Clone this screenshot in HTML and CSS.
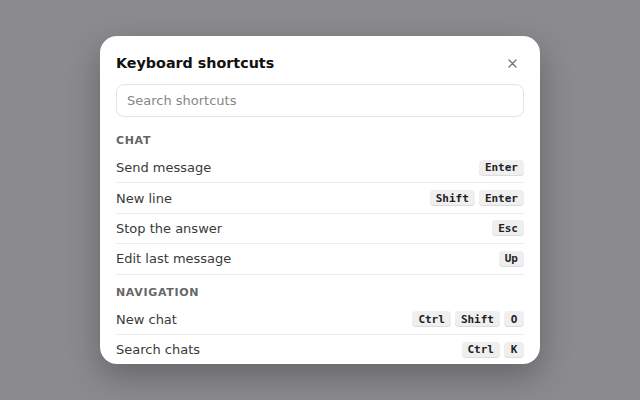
FILE: index.html
```html
<!DOCTYPE html>
<html lang="en">
<head>
  <meta charset="UTF-8" />
  <meta name="viewport" content="width=device-width, initial-scale=1" />
  <title>Keyboard shortcuts</title>
  <link rel="stylesheet" href="styles.css">
</head>
<body>
  <!-- SHORTCUTS DIALOG -->
  <div class="overlay">
    <div class="modal">
      <div class="modal-header">
        <h2>Keyboard shortcuts</h2>
        <button class="close-btn" aria-label="Close">
          <svg width="9" height="9" viewBox="0 0 9 9">
            <path d="M1 1 L8 8 M8 1 L1 8" stroke="#6f6f6f" stroke-width="1.3" stroke-linecap="round" fill="none" />
          </svg>
        </button>
      </div>

      <input type="text" class="search" placeholder="Search shortcuts" />

      <div class="list">
        <div class="section">
          <div class="section-title">Chat</div>
          <div class="row"><span>Send message</span><span class="keys"><kbd>Enter</kbd></span></div>
          <div class="row"><span>New line</span><span class="keys"><kbd>Shift</kbd><kbd>Enter</kbd></span></div>
          <div class="row"><span>Stop the answer</span><span class="keys"><kbd>Esc</kbd></span></div>
          <div class="row"><span>Edit last message</span><span class="keys"><kbd>Up</kbd></span></div>
        </div>

        <div class="section">
          <div class="section-title">Navigation</div>
          <div class="row"><span>New chat</span><span class="keys"><kbd>Ctrl</kbd><kbd>Shift</kbd><kbd>O</kbd></span></div>
          <div class="row"><span>Search chats</span><span class="keys"><kbd>Ctrl</kbd><kbd>K</kbd></span></div>
        </div>
      </div>
    </div>
  </div>
</body>
</html>
```

FILE: styles.css
```css
html, body {
  margin: 0;
  height: 100%;
}
body {
  font-family: "DejaVu Sans", sans-serif;
  background: #8b8a8f;
  color: #333;
}
.overlay {
  height: 100%;
  display: flex;
  align-items: center;
  justify-content: center;
}
.modal {
  width: 440px;
  height: 328px;
  box-sizing: border-box;
  background: #fff;
  border-radius: 17px;
  padding: 0 16px;
  display: flex;
  flex-direction: column;
  overflow: hidden;
  box-shadow: 0 12px 32px rgba(0,0,0,0.28);
}
.modal-header {
  display: flex;
  align-items: center;
  justify-content: space-between;
  padding-top: 15px;
  height: 24px;
}
h2 {
  margin: 0;
  font-size: 14.3px;
  font-weight: bold;
  color: #111;
}
.close-btn {
  width: 24px;
  height: 24px;
  border: none;
  background: none;
  padding: 0;
  display: flex;
  align-items: center;
  justify-content: center;
  cursor: pointer;
}
.search {
  margin-top: 9px;
  height: 33px;
  flex-shrink: 0;
  box-sizing: border-box;
  border: 1px solid #e3e3e3;
  border-radius: 8px;
  padding: 0 10px;
  font-family: "DejaVu Sans", sans-serif;
  font-size: 13px;
  color: #333;
  outline: none;
}
.search::placeholder {
  color: #868686;
}
.list {
  margin-top: 6px;
  overflow: hidden;
}
.section-title {
  padding-top: 11px;
  margin-bottom: 5px;
  line-height: 14px;
  font-size: 11px;
  font-weight: bold;
  letter-spacing: 0.06em;
  text-transform: uppercase;
  color: #666;
}
.row {
  display: flex;
  align-items: center;
  justify-content: space-between;
  height: 29.4px;
  border-bottom: 1px solid #ececec;
  font-size: 13px;
  color: #3a3a3a;
}
.keys {
  display: flex;
  gap: 4px;
}
kbd {
  min-width: 20px;
  height: 16px;
  box-sizing: border-box;
  padding: 0 6px;
  display: inline-flex;
  align-items: center;
  justify-content: center;
  background: #efefef;
  border-radius: 4px;
  box-shadow: inset 0 -1px 0 rgba(0,0,0,0.08);
  font-family: "DejaVu Sans Mono", monospace;
  font-size: 11px;
  font-weight: bold;
  color: #222;
}
```
